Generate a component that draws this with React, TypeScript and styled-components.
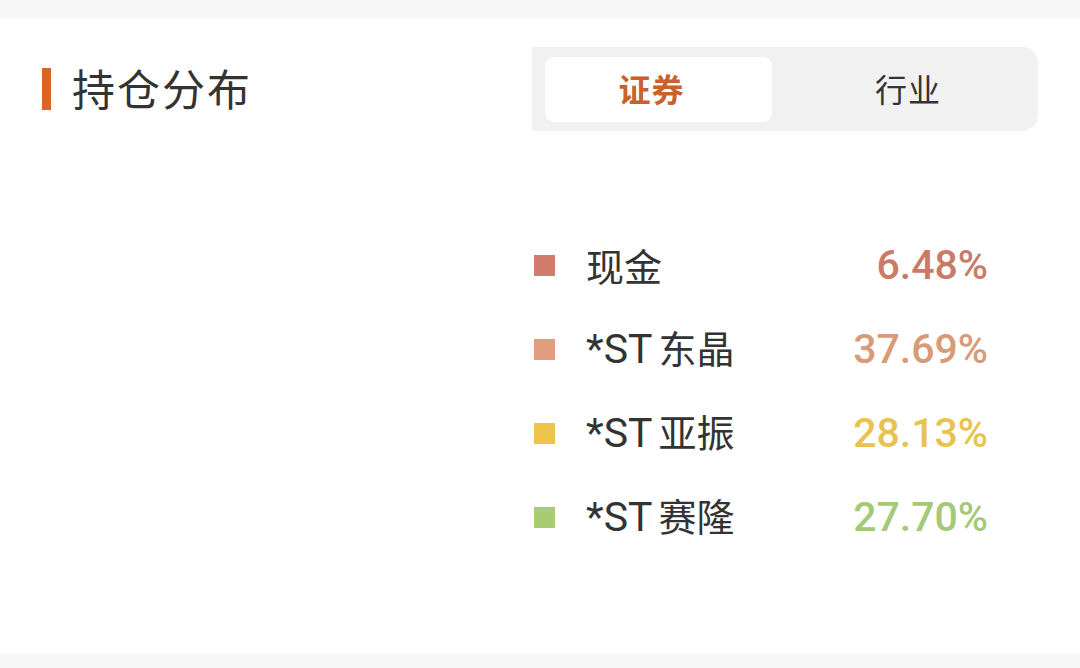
import React, { useState } from "react";
import styled, { createGlobalStyle } from "styled-components";

//-----------Styled Components------------------

const GlobalStyle = createGlobalStyle`
  body {
    margin: 0;
    background: #f7f7f7;
    font-family: "Noto Sans CJK SC", "Noto Sans", sans-serif;
  }
`;

const Page = styled.div`
  width: 1080px;
  height: 668px;
  padding-top: 19px;
  box-sizing: border-box;
`;

const Card = styled.section`
  background: #ffffff;
  height: 634px;
  padding-top: 28px;
  box-sizing: border-box;
`;

const Header = styled.div`
  display: flex;
  align-items: center;
  justify-content: space-between;
  padding: 0 42px;
  height: 84px;
`;

const Title = styled.h2`
  display: flex;
  align-items: center;
  margin: 0 0 4px;
  font-size: 43px;
  line-height: 1;
  font-weight: 400;
  letter-spacing: 2px;
  color: #333333;
`;

const TitleBar = styled.span`
  width: 9px;
  height: 42px;
  background: #d9652b;
  margin: 4px 21px 0 0;
`;

const Tabs = styled.div`
  display: flex;
  width: 506px;
  height: 84px;
  padding: 10px 0 9px 13px;
  box-sizing: border-box;
  background: #f1f1f1;
  border-radius: 0 16px 16px 0;
`;

const Tab = styled.button<{ $active: boolean }>`
  flex: ${(p) => (p.$active ? "0 0 227px" : "1")};
  padding: ${(p) => (p.$active ? "0 14px 4px 0" : "0 0 4px 6px")};
  border: none;
  border-radius: 9px;
  background: ${(p) => (p.$active ? "#ffffff" : "transparent")};
  color: ${(p) => (p.$active ? "#c9612b" : "#333333")};
  font-family: "Noto Sans CJK SC", sans-serif;
  font-size: 32px;
  line-height: 1;
  font-weight: ${(p) => (p.$active ? 700 : 400)};
  letter-spacing: 1px;
  cursor: pointer;
`;

const Body = styled.div`
  display: flex;
  padding-top: 92px;
`;

const ChartArea = styled.div`
  flex: 1;
`;

const Legend = styled.ul`
  list-style: none;
  margin: 0 92px 0 0;
  padding: 0;
  width: 454px;
`;

const Item = styled.li`
  display: flex;
  align-items: center;
  height: 84px;
`;

const Swatch = styled.span<{ $color: string }>`
  width: 21px;
  height: 21px;
  background: ${(p) => p.$color};
  margin: 0 31px 0 0;
`;

const Name = styled.span`
  flex: 1;
  font-size: 38px;
  line-height: 1;
  color: #333333;
  white-space: nowrap;
`;

const Prefix = styled.span`
  font-family: Roboto, "Noto Sans", sans-serif;
  font-size: 41px;
  font-weight: 400;
  margin-right: 6px;
`;

const Percent = styled.span<{ $color: string }>`
  font-family: Roboto, "Noto Sans", sans-serif;
  font-size: 41px;
  line-height: 1;
  font-weight: 500;
  color: ${(p) => p.$color};
`;

//==============================================

const holdings = [
  { prefix: "", name: "现金", value: "6.48%", swatch: "#d27d6c", text: "#c97b68" },
  { prefix: "*ST", name: "东晶", value: "37.69%", swatch: "#e29e7c", text: "#d99a78" },
  { prefix: "*ST", name: "亚振", value: "28.13%", swatch: "#ecc449", text: "#e8c350" },
  { prefix: "*ST", name: "赛隆", value: "27.70%", swatch: "#a8cc73", text: "#a5c979" },
];

function App() {
  const [tab, setTab] = useState("证券");

  return (
    <Page>
      <GlobalStyle />
      <Card>
        <Header>
          <Title>
            <TitleBar />
            持仓分布
          </Title>
          <Tabs>
            {["证券", "行业"].map((t) => (
              <Tab key={t} $active={tab === t} onClick={() => setTab(t)}>
                {t}
              </Tab>
            ))}
          </Tabs>
        </Header>
        <Body>
          <ChartArea />
          <Legend>
            {holdings.map((h) => (
              <Item key={h.name}>
                <Swatch $color={h.swatch} />
                <Name>
                  {h.prefix && <Prefix>{h.prefix}</Prefix>}
                  {h.name}
                </Name>
                <Percent $color={h.text}>{h.value}</Percent>
              </Item>
            ))}
          </Legend>
        </Body>
      </Card>
    </Page>
  );
}

export default App;
